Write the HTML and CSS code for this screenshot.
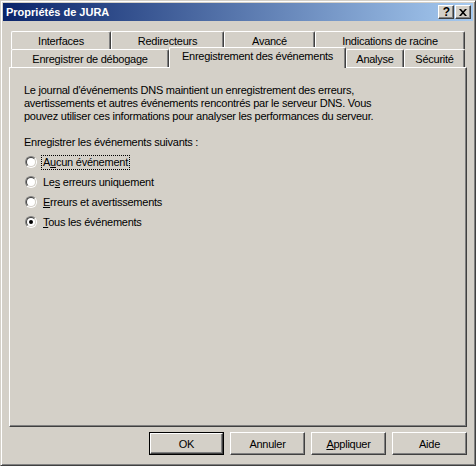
FILE: index.html
```html
<!DOCTYPE html>
<html lang="fr">
<head>
<meta charset="utf-8">
<title>Propriétés de JURA</title>
<link rel="stylesheet" href="styles.css">
</head>
<body>
<div class="window">
  <div class="titlebar">
    <span class="title">Propriétés de JURA</span>
    <div class="tbtns">
      <span class="tbtn help">?</span>
      <span class="tbtn close"><svg width="8" height="7" viewBox="0 0 8 7"><path d="M0 0h2l2 2.2L6 0h2L5 3.5 8 7H6L4 4.8 2 7H0l3-3.5z" fill="#000"/></svg></span>
    </div>
  </div>
  <div class="client">
    <div class="tabs">
      <div class="tabrow">
        <div class="tab t-interfaces">Interfaces</div>
        <div class="tab t-redir">Redirecteurs</div>
        <div class="tab t-avance">Avancé</div>
        <div class="tab t-indic">Indications de racine</div>
      </div>
      <div class="tabrow">
        <div class="tab t-debog">Enregistrer de débogage</div>
        <div class="tab t-events selected">Enregistrement des événements</div>
        <div class="tab t-analyse">Analyse</div>
        <div class="tab t-secu">Sécurité</div>
      </div>
    </div>
    <div class="panel">
      <p class="desc">Le journal d'événements DNS maintient un enregistrement des erreurs,<br>avertissements et autres événements rencontrés par le serveur DNS. Vous<br>pouvez utiliser ces informations pour analyser les performances du serveur.</p>
      <p class="label">Enregistrer les événements suivants :</p>
      <div class="radios">
        <div class="radio-row"><span class="radio"></span><span class="rlabel focus">A<u>u</u>cun événement</span></div>
        <div class="radio-row"><span class="radio"></span><span class="rlabel">Le<u>s</u> erreurs uniquement</span></div>
        <div class="radio-row"><span class="radio"></span><span class="rlabel"><u>E</u>rreurs et avertissements</span></div>
        <div class="radio-row"><span class="radio checked"></span><span class="rlabel"><u>T</u>ous les événements</span></div>
      </div>
    </div>
    <div class="buttons">
      <div class="btn default"><span class="btn-inner">OK</span></div>
      <div class="btn"><span class="btn-inner">Annuler</span></div>
      <div class="btn"><span class="btn-inner"><u>A</u>ppliquer</span></div>
      <div class="btn"><span class="btn-inner">Aide</span></div>
    </div>
  </div>
</div>
</body>
</html>
```

FILE: styles.css
```css
html, body {
  margin: 0;
  padding: 0;
  background: #D4D0C8;
}
body {
  font-family: "Liberation Sans", Arial, sans-serif;
  font-size: 11px;
  color: #000;
}
.window {
  width: 476px;
  height: 466px;
  box-sizing: border-box;
  border: 1px solid;
  border-color: #D4D0C8 #404040 #404040 #D4D0C8;
  box-shadow: inset 1px 1px #fff, inset -1px -1px #808080;
  padding: 2px;
  background: #D4D0C8;
  display: flex;
  flex-direction: column;
}
.titlebar {
  height: 18px;
  flex: none;
  background: linear-gradient(to right, #0A246A, #A6CAF0);
  display: flex;
  align-items: center;
  justify-content: space-between;
  padding: 0 2px 0 3px;
}
.title {
  color: #fff;
  font-weight: bold;
  font-size: 11px;
  line-height: 18px;
  white-space: nowrap;
}
.tbtns {
  display: flex;
  gap: 1px;
}
.tbtn {
  width: 16px;
  height: 14px;
  box-sizing: border-box;
  background: #D4D0C8;
  border: 1px solid;
  border-color: #fff #404040 #404040 #fff;
  box-shadow: inset -1px -1px #808080;
  display: flex;
  align-items: center;
  justify-content: center;
  font-weight: bold;
  font-size: 12px;
  line-height: 12px;
  color: #000;
}
.tbtn.help {
  padding-left: 1px;
}
.client {
  flex: 1;
  display: flex;
  flex-direction: column;
  padding: 10px 6px 0 6px;
  letter-spacing: -0.25px;
}
.tabs {
  padding: 0 2px;
  display: flex;
  flex-direction: column;
}
.tabrow {
  display: flex;
  height: 18px;
}
.tab {
  box-sizing: border-box;
  border-top: 1px solid #fff;
  border-left: 1px solid #fff;
  border-right: 1px solid #404040;
  border-top-left-radius: 2px;
  border-top-right-radius: 2px;
  box-shadow: inset -1px 0 #808080;
  background: #D4D0C8;
  text-align: center;
  line-height: 16px;
  padding-top: 1px;
  white-space: nowrap;
}
.t-interfaces { width: 100px; }
.t-redir { width: 113px; }
.t-avance { width: 91px; }
.t-indic { width: 150px; }
.t-debog { width: 158px; }
.t-events { width: 177px; }
.t-analyse { width: 58px; }
.t-secu { width: 61px; }
.tab.selected {
  margin-top: -2px;
  margin-bottom: -1px;
  position: relative;
  z-index: 1;
  padding-top: 0;
}
.panel {
  width: 458px;
  height: 360px;
  box-sizing: border-box;
  border: 1px solid;
  border-color: #fff #404040 #404040 #fff;
  box-shadow: inset -1px -1px #808080;
  padding: 16px 14px;
}
.panel p {
  margin: 0;
  line-height: 13px;
}
.panel .label {
  margin-top: 13px;
}
.radios {
  margin-top: 5px;
  display: flex;
  flex-direction: column;
  gap: 4px;
}
.radio-row {
  display: flex;
  align-items: center;
  height: 16px;
}
.radio {
  width: 12px;
  height: 12px;
  box-sizing: border-box;
  margin-left: 1px;
  border-radius: 50%;
  border: 1px solid;
  border-color: #808080 #fff #fff #808080;
  position: relative;
  flex: none;
}
.radio::before {
  content: "";
  position: absolute;
  inset: 0;
  border-radius: 50%;
  border: 1px solid;
  border-color: #404040 #D4D0C8 #D4D0C8 #404040;
  background: #fff;
}
.radio.checked::after {
  content: "";
  position: absolute;
  left: 3px;
  top: 3px;
  width: 4px;
  height: 4px;
  border-radius: 50%;
  background: #000;
}
.rlabel {
  margin-left: 4px;
  padding: 0 1px;
  border: 1px dotted transparent;
  line-height: 13px;
}
.rlabel.focus {
  border-color: #000;
}
.buttons {
  display: flex;
  justify-content: flex-end;
  gap: 6px;
  margin-top: 5px;
}
.btn {
  width: 75px;
  height: 23px;
  box-sizing: border-box;
  border: 1px solid;
  border-color: #fff #404040 #404040 #fff;
  box-shadow: inset -1px -1px #808080;
  display: flex;
}
.btn.default {
  border: 1px solid #000;
  box-shadow: none;
}
.btn.default .btn-inner {
  border: 1px solid;
  border-color: #fff #404040 #404040 #fff;
  box-shadow: inset -1px -1px #808080;
}
.btn-inner {
  flex: 1;
  display: flex;
  align-items: center;
  justify-content: center;
  box-sizing: border-box;
}
```
